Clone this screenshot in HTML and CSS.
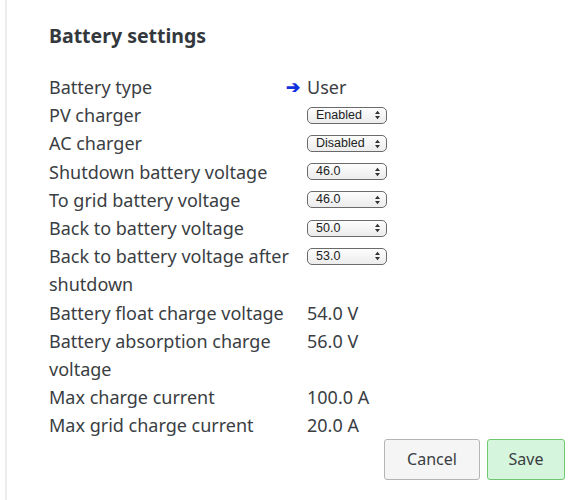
FILE: index.html
```html
<!DOCTYPE html>
<html>
<head>
<meta charset="utf-8">
<link rel="stylesheet" href="styles.css">
</head>
<body>
<div class="panel">
  <h2 class="title">Battery settings</h2>
  <div class="grid">
    <div class="label">Battery type</div>
    <div class="value"><span class="arrow">➔</span>User</div>

    <div class="label">PV charger</div>
    <div class="value"><span class="sel"><span class="sel-text">Enabled</span><svg class="updown" width="7" height="10" viewBox="0 0 7 10"><path d="M3.5 0.8 L6 4 H1 Z M3.5 9.2 L6 6 H1 Z" fill="#333"/></svg></span></div>

    <div class="label">AC charger</div>
    <div class="value"><span class="sel"><span class="sel-text">Disabled</span><svg class="updown" width="7" height="10" viewBox="0 0 7 10"><path d="M3.5 0.8 L6 4 H1 Z M3.5 9.2 L6 6 H1 Z" fill="#333"/></svg></span></div>

    <div class="label">Shutdown battery voltage</div>
    <div class="value"><span class="sel"><span class="sel-text">46.0</span><svg class="updown" width="7" height="10" viewBox="0 0 7 10"><path d="M3.5 0.8 L6 4 H1 Z M3.5 9.2 L6 6 H1 Z" fill="#333"/></svg></span></div>

    <div class="label">To grid battery voltage</div>
    <div class="value"><span class="sel"><span class="sel-text">46.0</span><svg class="updown" width="7" height="10" viewBox="0 0 7 10"><path d="M3.5 0.8 L6 4 H1 Z M3.5 9.2 L6 6 H1 Z" fill="#333"/></svg></span></div>

    <div class="label">Back to battery voltage</div>
    <div class="value"><span class="sel"><span class="sel-text">50.0</span><svg class="updown" width="7" height="10" viewBox="0 0 7 10"><path d="M3.5 0.8 L6 4 H1 Z M3.5 9.2 L6 6 H1 Z" fill="#333"/></svg></span></div>

    <div class="label">Back to battery voltage after shutdown</div>
    <div class="value"><span class="sel"><span class="sel-text">53.0</span><svg class="updown" width="7" height="10" viewBox="0 0 7 10"><path d="M3.5 0.8 L6 4 H1 Z M3.5 9.2 L6 6 H1 Z" fill="#333"/></svg></span></div>

    <div class="label">Battery float charge voltage</div>
    <div class="value">54.0 V</div>

    <div class="label">Battery absorption charge voltage</div>
    <div class="value">56.0 V</div>

    <div class="label">Max charge current</div>
    <div class="value">100.0 A</div>

    <div class="label">Max grid charge current</div>
    <div class="value">20.0 A</div>
  </div>
  <div class="actions">
    <button class="btn btn-cancel">Cancel</button>
    <button class="btn btn-save">Save</button>
  </div>
</div>
</body>
</html>
```
FILE: styles.css
```css
html, body {
  margin: 0;
  padding: 0;
  background: #fff;
}
body {
  font-family: "Noto Sans", "Open Sans", sans-serif;
  color: #3a3e43;
  width: 586px;
  height: 500px;
  overflow: hidden;
}
.panel {
  margin-left: 5px;
  border-left: 2px solid #ececec;
  padding: 24px 21px 0 42px;
  height: 500px;
  box-sizing: border-box;
}
.title {
  margin: 0;
  font-size: 19.5px;
  line-height: 24px;
  font-weight: 700;
  color: #33383d;
}
.grid {
  margin-top: 25px;
  display: grid;
  grid-template-columns: 250px auto;
  column-gap: 8px;
  font-size: 18px;
  line-height: 28.2px;
}
.value {
  display: flex;
  align-items: center;
  height: 28.2px;
}
.arrow {
  color: #1133dd;
  font-size: 17px;
  font-weight: 700;
  margin-left: -21px;
  width: 21px;
}
.sel {
  display: inline-flex;
  align-items: center;
  justify-content: space-between;
  box-sizing: border-box;
  width: 80px;
  height: 17px;
  border: 1px solid #6a6a6a;
  border-radius: 5px;
  padding: 0 5px 0 8px;
  background: linear-gradient(#fdfdfd, #ececec);
  font-family: "Liberation Sans", Arial, sans-serif;
  font-size: 12.5px;
  line-height: 15px;
  color: #222;
}
.updown {
  display: block;
}
.actions {
  display: flex;
  justify-content: flex-end;
  gap: 7px;
  margin-top: -1px;
}
.btn {
  font-family: "Noto Sans", "Open Sans", sans-serif;
  font-size: 16px;
  height: 41px;
  border-radius: 3px;
  color: #3a3e43;
  cursor: pointer;
}
.btn-cancel {
  width: 96px;
  background: #f5f5f5;
  border: 1px solid #b5b5b5;
}
.btn-save {
  width: 78px;
  background: #d5f5dc;
  border: 1px solid #6fc76f;
}
```
